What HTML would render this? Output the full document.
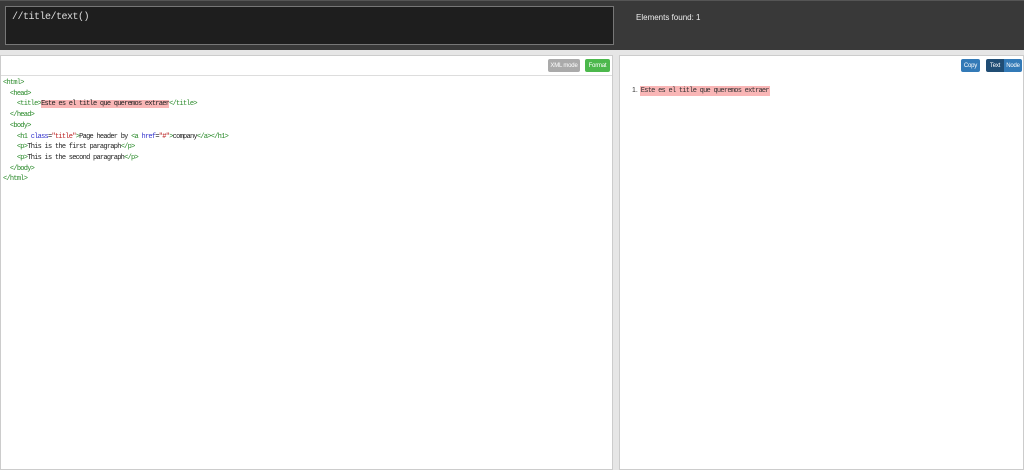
<!DOCTYPE html>
<html><head><style>
body{margin:0;width:1024px;height:470px;overflow:hidden;background:#e6e6e6;font-family:"Liberation Sans",sans-serif;position:relative}
.top{position:absolute;left:0;top:0;width:1024px;height:50px;background:#393939;border-top:1px solid #555;box-sizing:border-box}
.ta{position:absolute;left:5px;top:6px;width:609px;height:39px;background:#1e1e1e;border:1px solid #777;box-sizing:border-box;color:#ddd;font:10px "Liberation Mono",monospace;padding:5px 6px;letter-spacing:-0.5px}
.found{position:absolute;left:636px;top:13px;color:#eee;font-size:8px}
.panel{position:absolute;top:55px;background:#fff;border:1px solid #ccc;box-sizing:border-box;height:415px}
.btn{position:absolute;top:59px;height:13px;border-radius:2px;color:#fff;font-size:6px;display:flex;align-items:center;justify-content:center;letter-spacing:-0.2px}
.code{position:absolute;left:3px;top:78px;font:7px/10.7px "Liberation Mono",monospace;letter-spacing:-0.74px;color:#222;white-space:pre}
.t{color:#2a8a2a}.a{color:#3333cc}.s{color:#b22}.h{background:#f9b6b6}
</style></head><body>
<div class="top"></div>
<div class="ta">//title/text()</div>
<div class="found">Elements found: 1</div>
<div class="panel" style="left:0;width:613px"><div style="position:absolute;left:0;right:0;top:19px;border-top:1px solid #ddd"></div></div>
<div class="panel" style="left:619px;width:405px"></div>
<div class="btn" style="left:548px;width:32px;background:#aaa">XML mode</div>
<div class="btn" style="left:585px;width:25px;background:#4cb84c">Format</div>
<div class="btn" style="left:961px;width:19px;background:#337ab7">Copy</div>
<div class="btn" style="left:986px;width:18px;background:#204d74;border-radius:2px 0 0 2px">Text</div>
<div class="btn" style="left:1004px;width:18px;background:#337ab7;border-radius:0 2px 2px 0">Node</div>
<div class="code"><span class="t">&lt;html&gt;</span>
  <span class="t">&lt;head&gt;</span>
    <span class="t">&lt;title&gt;</span><span class="h">Este es el title que queremos extraer</span><span class="t">&lt;/title&gt;</span>
  <span class="t">&lt;/head&gt;</span>
  <span class="t">&lt;body&gt;</span>
    <span class="t">&lt;h1 </span><span class="a">class</span>=<span class="s">"title"</span><span class="t">&gt;</span>Page header by <span class="t">&lt;a </span><span class="a">href</span>=<span class="s">"#"</span><span class="t">&gt;</span>company<span class="t">&lt;/a&gt;&lt;/h1&gt;</span>
    <span class="t">&lt;p&gt;</span>This is the first paragraph<span class="t">&lt;/p&gt;</span>
    <span class="t">&lt;p&gt;</span>This is the second paragraph<span class="t">&lt;/p&gt;</span>
  <span class="t">&lt;/body&gt;</span>
<span class="t">&lt;/html&gt;</span></div>
<div style="position:absolute;left:632px;top:87px;font-size:7px;color:#333">1. <span class="h" style="font:7px 'Liberation Mono',monospace;letter-spacing:-0.74px;padding:1px 1px">Este es el title que queremos extraer</span></div>
</body></html>
